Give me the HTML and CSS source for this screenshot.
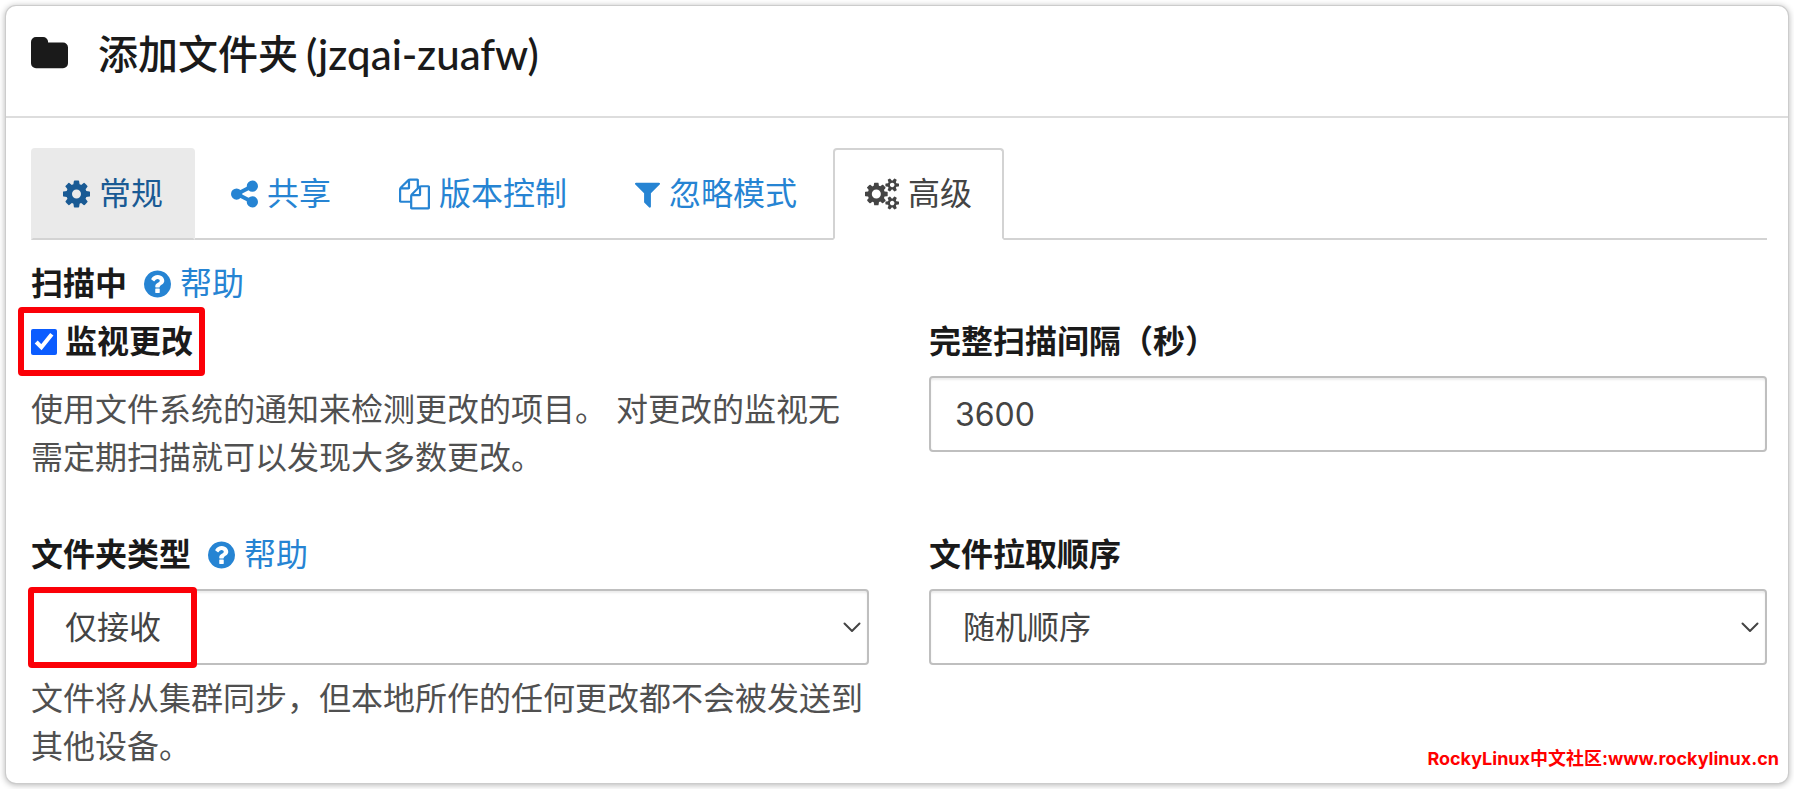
FILE: index.html
```html
<!DOCTYPE html>
<html lang="zh-CN">
<head>
<meta charset="utf-8">
<meta name="viewport" content="width=device-width, initial-scale=1">
<title>添加文件夹</title>
<link rel="stylesheet" href="styles.css">
</head>
<body>
<svg class="sprite" aria-hidden="true">
  <symbol id="question" viewBox="128 0 1536 1792"><path d="M1024 1376v-192q0-14-9-23t-23-9h-192q-14 0-23 9t-9 23v192q0 14 9 23t23 9h192q14 0 23-9t9-23zm256-672q0-88-55.500-163t-138.500-116-170-41q-243 0-371 213-15 24 8 42l132 100q7 6 19 6 16 0 25-12 53-68 86-92 34-24 86-24 48 0 85.500 26t37.500 59q0 38-20 61t-68 45q-63 28-115.500 86.500t-52.500 125.500v36q0 14 9 23t23 9h192q14 0 23-9t9-23q0-19 21.500-49.500t54.500-49.500q32-18 49-28.500t46-35 44.500-48 28-60.500 12.500-81zm384 192q0 209-103 385.500t-279.500 279.500-385.500 103-385.500-103-279.500-279.500-103-385.500 103-385.500 279.500-279.500 385.500-103 385.500 103 279.500 279.500 103 385.500z"/></symbol>
  <symbol id="chevron" viewBox="0 0 18 11"><path d="M1.500 1.500 9 9l7.500-7.500" fill="none" stroke="currentColor" stroke-width="2" stroke-linecap="round" stroke-linejoin="round"/></symbol>
</svg>
<main class="modal">
  <header class="modal-header">
    <svg class="icon-folder" viewBox="64 0 1664 1792" aria-hidden="true"><path d="M1728 608v704q0 92-66 158t-158 66h-1216q-92 0-158-66t-66-158v-960q0-92 66-158t158-66h320q92 0 158 66t66 158v32h672q92 0 158 66t66 158z"/></svg>
    <h1 class="modal-title">添加文件夹 <span class="folder-id">(jzqai-zuafw)</span></h1>
  </header>
  <div class="modal-body">
    <nav class="tabs">
      <a class="tab tab-hover" href="#general"><svg class="icon icon-27" viewBox="128 0 1536 1792" aria-hidden="true"><path d="M1152 896q0-106-75-181t-181-75-181 75-75 181 75 181 181 75 181-75 75-181zm512-109v222q0 12-8 23t-20 13l-185 28q-19 54-39 91 35 50 107 138 10 12 10 25t-9 23q-27 37-99 108t-94 71q-12 0-26-9l-138-108q-44 23-91 38-16 136-29 186-7 28-36 28h-222q-14 0-24.500-8.500t-11.500-21.500l-28-184q-49-16-90-37l-141 107q-10 9-25 9-14 0-25-11-126-114-165-168-7-10-7-23 0-12 8-23 15-21 51-66.500t54-70.500q-27-50-41-99l-183-27q-13-2-21-12.500t-8-23.500v-222q0-12 8-23t19-13l186-28q14-46 39-92-40-57-107-138-10-12-10-24 0-10 9-23 26-36 98.500-107.500t94.500-71.500q13 0 26 10l138 107q44-23 91-38 16-136 29-186 7-28 36-28h222q14 0 24.500 8.500t11.500 21.500l28 184q49 16 90 37l142-107q9-9 24-9 13 0 25 10 129 119 165 170 7 8 7 22 0 12-8 23-15 21-51 66.500t-54 70.500q26 50 41 98l183 28q13 2 21 12.500t8 23.500z"/></svg>常规</a>
      <a class="tab" href="#sharing"><svg class="icon icon-27" viewBox="128 0 1536 1792" aria-hidden="true"><path d="M1344 1024q133 0 226.500 93.500t93.500 226.500-93.500 226.500-226.500 93.500-226.500-93.500-93.500-226.500q0-12 2-34l-360-180q-92 86-218 86-133 0-226.500-93.500t-93.500-226.500 93.500-226.500 226.500-93.500q126 0 218 86l360-180q-2-22-2-34 0-133 93.500-226.500t226.500-93.500 226.500 93.500 93.500 226.500-93.500 226.500-226.500 93.500q-126 0-218-86l-360 180q2 22 2 34t-2 34l360 180q92-86 218-86z"/></svg>共享</a>
      <a class="tab" href="#versioning"><svg class="icon icon-32" viewBox="0 0 1792 1792" aria-hidden="true"><path d="M1696 384q40 0 68 28t28 68v1216q0 40-28 68t-68 28h-960q-40 0-68-28t-28-68v-288h-544q-40 0-68-28t-28-68v-672q0-40 20-88t48-76l408-408q28-28 76-48t88-20h416q40 0 68 28t28 68v328q68-40 128-40h416zm-544 213l-299 299h299v-299zm-640-384l-299 299h299v-299zm196 647l316-316v-416h-384v416q0 40-28 68t-68 28h-416v640h512v-256q0-40 20-88t48-76zm956 804v-1152h-384v416q0 40-28 68t-68 28h-416v640h896z"/></svg>版本控制</a>
      <a class="tab" href="#ignores"><svg class="icon icon-25" viewBox="192 0 1408 1792" aria-hidden="true"><path d="M1595 295q17 41-14 70l-493 493v742q0 42-39 59-13 5-25 5-27 0-45-19l-256-256q-19-19-19-45v-486l-493-493q-31-29-14-70 17-39 59-39h1280q42 0 59 39z"/></svg>忽略模式</a>
      <a class="tab tab-active" href="#advanced" aria-current="page"><svg class="icon icon-34" viewBox="-64 0 1920 1792" aria-hidden="true"><path d="M832 896q0-106-75-181t-181-75-181 75-75 181 75 181 181 75 181-75 75-181zm768 512q0-52-38-90t-90-38-90 38-38 90q0 53 37.500 90.500t90.500 37.500 90.500-37.500 37.500-90.500zm0-1024q0-52-38-90t-90-38-90 38-38 90q0 53 37.500 90.500t90.500 37.500 90.500-37.500 37.500-90.500zm-384 421v185q0 10-7 19.500t-16 10.500l-155 24q-11 35-32 76 34 48 90 115 7 11 7 20 0 12-7 19-23 30-82.500 89.500t-78.500 59.500q-11 0-21-7l-115-90q-37 19-77 31-11 108-23 155-7 24-30 24h-186q-11 0-20-7.500t-10-17.500l-23-153q-34-10-75-31l-118 89q-7 7-20 7-11 0-21-8-144-133-144-160 0-9 7-19 10-14 41-53t47-61q-23-44-35-82l-152-24q-10-1-17-9.500t-7-19.500v-185q0-10 7-19.500t16-10.500l155-24q11-35 32-76-34-48-90-115-7-11-7-20 0-12 7-20 22-30 82-89t79-59q11 0 21 7l115 90q34-18 77-32 11-108 23-154 7-24 30-24h186q11 0 20 7.500t10 17.500l23 153q34 10 75 31l118-89q8-7 20-7 11 0 21 8 144 133 144 160 0 8-7 19-12 16-42 54t-45 60q23 48 34 82l152 23q10 2 17 10.500t7 19.500zm640 533v140q0 16-149 31-12 27-30 52 51 113 51 138 0 4-4 7-122 71-124 71-8 0-46-47t-52-68q-20 2-30 2t-30-2q-14 21-52 68t-46 47q-2 0-124-71-4-3-4-7 0-25 51-138-18-25-30-52-149-15-149-31v-140q0-16 149-31 13-29 30-52-51-113-51-138 0-4 4-7 4-2 35-20t59-34 30-16q8 0 46 46.500t52 67.500q20-2 30-2t30 2q51-71 92-112l6-2q4 0 124 70 4 3 4 7 0 25-51 138 17 23 30 52 149 15 149 31zm0-1024v140q0 16-149 31-12 27-30 52 51 113 51 138 0 4-4 7-122 71-124 71-8 0-46-47t-52-68q-20 2-30 2t-30-2q-14 21-52 68t-46 47q-2 0-124-71-4-3-4-7 0-25 51-138-18-25-30-52-149-15-149-31v-140q0-16 149-31 13-29 30-52-51-113-51-138 0-4 4-7 4-2 35-20t59-34 30-16q8 0 46 46.500t52 67.500q20-2 30-2t30 2q51-71 92-112l6-2q4 0 124 70 4 3 4 7 0 25-51 138 17 23 30 52 149 15 149 31z"/></svg>高级</a>
    </nav>
    <form class="form">
      <div class="line">
        <strong class="label">扫描中</strong>
        <a class="help" href="#scanning"><svg class="icon icon-27" aria-hidden="true"><use href="#question"/></svg>帮助</a>
      </div>
      <div class="row">
        <div class="col">
          <label class="check marked" for="watch"><input class="checkbox" id="watch" type="checkbox" checked>监视更改<span class="mark mark-check"></span></label>
          <p class="hint hint-watch">使用文件系统的通知来检测更改的项目。 对更改的监视无需定期扫描就可以发现大多数更改。</p>
        </div>
        <div class="col">
          <label class="label" for="interval">完整扫描间隔（秒）</label>
          <input class="control" id="interval" type="text" inputmode="numeric" value="3600">
        </div>
      </div>
      <div class="row">
        <div class="col">
          <div class="line">
            <label class="label" for="type">文件夹类型</label>
            <a class="help" href="#foldertype"><svg class="icon icon-27" aria-hidden="true"><use href="#question"/></svg>帮助</a>
          </div>
          <div class="picker marked">
            <select class="control select" id="type"><option>仅接收</option></select>
            <svg class="chevron" aria-hidden="true"><use href="#chevron"/></svg>
            <span class="mark mark-select"></span>
          </div>
          <p class="hint">文件将从集群同步，但本地所作的任何更改都不会被发送到其他设备。</p>
        </div>
        <div class="col">
          <label class="label" for="order">文件拉取顺序</label>
          <div class="picker">
            <select class="control select" id="order"><option>随机顺序</option></select>
            <svg class="chevron" aria-hidden="true"><use href="#chevron"/></svg>
          </div>
        </div>
      </div>
    </form>
  </div>
  <div class="watermark">RockyLinux中文社区:www.rockylinux.cn</div>
</main>
</body>
</html>
```
FILE: styles.css
```css
* {
  box-sizing: border-box;
}

body {
  margin: 0;
  padding: 6px;
  background: #fff;
  color: #1a1a1a;
  font-family: Inter, "Noto Sans CJK SC", sans-serif;
  font-size: 32px;
  line-height: 48px;
}

.sprite {
  display: none;
}

.modal {
  position: relative;
  background: #fff;
  border-radius: 10px;
  box-shadow: 0 0 0 1px #ccc, 0 1px 6px 1px rgba(0, 0, 0, 0.3);
  padding-bottom: 12px;
}

.modal-header {
  display: flex;
  align-items: center;
  gap: 30px;
  padding: 20px 25px 34px;
  border-bottom: 2px solid #ddd;
}

.icon-folder {
  width: 37px;
  height: 40px;
  fill: currentColor;
}

.modal-title {
  display: flex;
  gap: 8px;
  margin: 0;
  font-family: Lato, "Noto Sans CJK SC", sans-serif;
  font-size: 40px;
  font-weight: 500;
  line-height: 56px;
}

.folder-id {
  font-size: 42px;
}

.modal-body {
  padding: 30px 21px 0 25px;
}

.tabs {
  display: flex;
  gap: 4px;
  height: 92px;
  border-bottom: 2px solid #d3d3d3;
}

.tab {
  display: flex;
  align-items: center;
  gap: 9px;
  height: 92px;
  padding: 0 30px;
  border: 2px solid transparent;
  border-radius: 4px 4px 0 0;
  color: #2684d3;
  text-decoration: none;
}

.tab-hover {
  background: #eaeaea;
  border-bottom-color: #d3d3d3;
  color: #195a94;
}

.tab-active {
  background: #fff;
  border-color: #d3d3d3 #d3d3d3 #fff;
  color: #444;
}

.icon {
  height: 32px;
  fill: currentColor;
}

.icon-25 {
  width: 25px;
}

.icon-27 {
  width: 27px;
}

.icon-32 {
  width: 31px;
}

.icon-34 {
  width: 34px;
}

.form {
  padding-top: 20px;
}

.line {
  display: flex;
  align-items: center;
  gap: 17px;
}

.label {
  font-weight: 700;
}

.help {
  display: flex;
  align-items: center;
  gap: 9px;
  color: #2684d3;
  text-decoration: none;
}

.row {
  display: grid;
  grid-template-columns: 1fr 1fr;
  gap: 60px;
  margin-top: 10px;
}

.row + .row {
  margin-top: 49px;
}

.col {
  display: flex;
  flex-direction: column;
  gap: 10px;
}

.check {
  display: flex;
  align-items: center;
  align-self: flex-start;
  gap: 8px;
  font-weight: 700;
}

.checkbox {
  width: 26px;
  height: 26px;
  margin: 0;
  accent-color: #0b5cff;
}

.hint {
  margin: 0;
  color: #505050;
}

.hint-watch {
  padding-top: 10px;
}

.control {
  width: 100%;
  height: 76px;
  padding: 0 24px;
  border: 2px solid #bfbfbf;
  border-radius: 4px;
  background: #fff;
  box-shadow: inset 0 2px 2px rgba(0, 0, 0, 0.08);
  color: #444;
  font-family: Inter, "Noto Sans CJK SC", sans-serif;
  font-size: 32px;
}

.picker {
  display: grid;
  align-items: center;
}

.select {
  grid-area: 1 / 1;
  padding: 0 32px;
  appearance: none;
}

.chevron {
  grid-area: 1 / 1;
  justify-self: end;
  width: 18px;
  height: 11px;
  margin-right: 8px;
  color: #444;
  pointer-events: none;
}

.marked {
  position: relative;
}

.mark {
  position: absolute;
  border: 6px solid #fb0007;
  border-radius: 4px;
  pointer-events: none;
}

.mark-check {
  inset: -11px -12px -10px -13px;
}

.mark-select {
  top: -2px;
  bottom: -3px;
  left: -3px;
  width: 169px;
}

.watermark {
  position: absolute;
  right: 9px;
  bottom: 12px;
  color: #f00;
  font-family: Inter, "Noto Sans CJK SC", sans-serif;
  font-size: 18px;
  font-weight: 700;
  line-height: 24px;
}
```
